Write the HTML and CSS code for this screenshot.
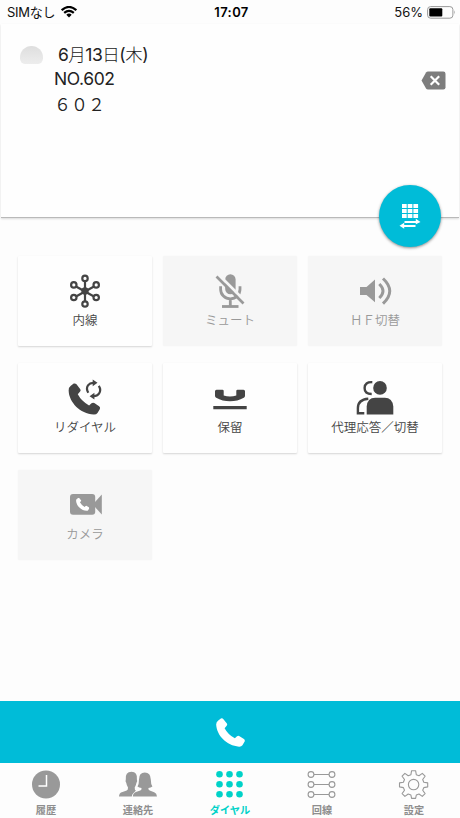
FILE: index.html
```html
<!DOCTYPE html>
<html lang="ja">
<head>
<meta charset="utf-8">
<title>ダイヤル</title>
<link rel="stylesheet" href="styles.css">
</head>
<body>
<svg class="defs" width="0" height="0">
  <symbol id="handset" viewBox="0 0 32 32"><path d="M2.500 2.800 5.400.6Q7 0 8.200 1.300L12 6.200Q12.800 7.400 11.800 8.500L9.500 11.200Q13 18 20.800 22.400L23.200 20.200Q24.500 19.200 26 20L30.800 23.200Q32.300 24.500 31.600 26L29.200 30Q28 31.700 25.500 31.600C11.500 30.500 1 19.500.2 7.500Q0 4.800 2.500 2.800z"/></symbol>
</svg>
<main class="app">
  <header class="status">
    <div class="carrier"><span>SIMなし</span>
      <svg width="16" height="12" viewBox="0 0 16 12"><path d="M.7 4.200Q8-2.300 15.300 4.200M3.200 6.900Q8 2.700 12.800 6.900" fill="none" stroke="#000" stroke-width="2.200"/><path d="M5.300 8.700Q8 6.500 10.700 8.700L8 11.600z"/></svg>
    </div>
    <time class="clock">17:07</time>
    <div class="power"><span>56%</span>
      <svg width="29" height="13" viewBox="0 0 29 13"><rect x=".6" y=".6" width="25.300" height="11.600" rx="3" fill="none" stroke="#999"/><rect x="2.300" y="2.300" width="13" height="8.200" rx="1"/><path d="M27.200 4.300q1.400 2.100 0 4.200z" fill="#888"/></svg>
    </div>
  </header>

  <section class="display">
    <div class="presence"></div>
    <div class="lines">
      <p class="date">6<span>月</span>13<span>日</span>(<span>木</span>)</p>
      <p class="number">NO.602</p>
      <p class="name">６０２</p>
    </div>
    <svg class="erase" width="25" height="19" viewBox="0 0 25 19"><path d="M7 .5h15.300q2.200 0 2.200 2.200v13.600q0 2.200-2.200 2.200H7Q5.800 18.500 5 17.400L.5 9.500 5 1.600Q5.800.5 7 .5z" fill="#7d7d7d"/><path d="M9.700 5.200l8.500 8.500m0-8.500l-8.500 8.500" stroke="#fff" stroke-width="2.200"/></svg>
    <div class="switch">
      <svg width="22" height="26" viewBox="0 0 22 26" fill="#fff"><path d="M3 1h4.700v4H3zM8.700 1h4.700v4H8.700zM14.400 1h4.700v4h-4.700zM3 6h4.700v4H3zM8.700 6h4.700v4H8.700zM14.400 6h4.700v4h-4.700zM3 11h4.700v4H3zM8.700 11h4.700v4H8.700zM14.400 11h4.700v4h-4.700z"/><path d="M5.500 18h11.300v-2.200l4.700 3.200-4.700 2.300v-1.300H5.500zM16.500 24.100H5.200v1.700L.5 22.700l4.700-2.900v2.200h11.300z"/></svg>
    </div>
  </section>

  <section class="keys">
    <button class="key">
      <svg width="48" height="38" viewBox="0 0 48 38" fill="none" stroke="#444" stroke-width="2.200"><path d="M24 9v20M15 14.500l18 10M33 14.500l-18 10"/><circle cx="24" cy="19" r="2.600" fill="#444"/><circle cx="24" cy="6.400" r="2.700"/><circle cx="24" cy="32" r="2.700"/><circle cx="12.800" cy="12.900" r="2.700"/><circle cx="35.200" cy="12.900" r="2.700"/><circle cx="12.800" cy="25.500" r="2.700"/><circle cx="35.200" cy="25.500" r="2.700"/></svg>
      <span>内線</span>
    </button>
    <button class="key off">
      <svg width="48" height="38" viewBox="0 0 48 38" fill="none" stroke="#999"><rect x="19.200" y="2.200" width="10.400" height="20" rx="5.200" fill="#999" stroke="none"/><path d="M14.600 14.200v3a9.700 9.700 0 0 0 19.400 0v-3M24.300 27v7" stroke-width="2.800"/><path d="M16 34.500h16.500" stroke-width="2.800"/><path d="M12.400 2.500l27 27" stroke="#f6f6f6" stroke-width="3"/><path d="M10.500 4.500l27 27" stroke-width="2.600"/></svg>
      <span>ミュート</span>
    </button>
    <button class="key off">
      <svg width="48" height="38" viewBox="0 0 48 38"><path d="M9 15h6.500L24 7.500v22.800L15.500 23H9z" fill="#999"/><path d="M28.300 12q7.400 7 0 14M32 6.500q13.500 12.600 0 25.200" fill="none" stroke="#999" stroke-width="3"/></svg>
      <span>ＨＦ切替</span>
    </button>
    <button class="key">
      <svg width="48" height="38" viewBox="0 0 48 38"><use href="#handset" x="7.300" y="4" width="32" height="32" fill="#444"/><path d="M27.300 13.700Q24.800 9.500 27 6.300 28.800 3.900 32.200 3.800M37.800 6.800Q40.500 11 38 14.600 36.200 17.100 32.700 17.200" fill="none" stroke="#444" stroke-width="2.200"/><path d="M31.700.4l4.800 3.400-4.800 3.400zM33.400 13.700l-4.800 3.500 4.800 3.400z" fill="#444"/></svg>
      <span>リダイヤル</span>
    </button>
    <button class="key">
      <svg width="48" height="38" viewBox="0 0 48 38" fill="#444"><path d="M10.500 10.700h6q1.200 0 1.200 1.200v4.600q6.300 1.900 12.600 0v-4.600q0-1.200 1.200-1.200h6q1.500 0 1.500 1.500v4.500q0 1.300-1.200 2-6.200 3.600-13.800 3.600t-13.800-3.600Q9 18 9 16.700v-4.500q0-1.500 1.500-1.500zM7.300 27h33.400v3.300H7.300z"/></svg>
      <span>保留</span>
    </button>
    <button class="key">
      <svg width="48" height="38" viewBox="0 0 48 38"><circle cx="29" cy="8.900" r="6.800" fill="#444"/><path d="M15.700 35.500v-8q.6-8.800 8.500-8.800h9.600q7.700 0 8.500 8.800v8z" fill="#444"/><path d="M21.300 3.200Q13.700 2.800 13.600 8.900T20.700 15M17.300 19.700Q6.900 20.500 6.900 29v5.300h6.400" fill="none" stroke="#444" stroke-width="2.400"/></svg>
      <span>代理応答／切替</span>
    </button>
    <button class="key off">
      <svg width="48" height="38" viewBox="0 0 48 38"><rect x="9" y="8" width="25.200" height="20.700" rx="3" fill="#999"/><path d="M34 16l6.800-7.400v20L34 21z" fill="#999"/><use href="#handset" x="15" y="11.700" width="13.300" height="13.300" fill="#fff"/></svg>
      <span>カメラ</span>
    </button>
  </section>

  <button class="call"><svg width="29" height="29"><use href="#handset" width="29" height="29" fill="#fff"/></svg></button>

  <nav class="tabs">
    <a class="tab"><svg width="40" height="30" viewBox="0 0 40 30"><circle cx="20" cy="15.500" r="14" fill="#999"/><path d="M20.500 6v11h-8" fill="none" stroke="#fff" stroke-width="1.500"/></svg><span>履歴</span></a>
    <a class="tab"><svg width="40" height="30" viewBox="0 0 40 30" fill="#999"><path d="M1 27.500q0-3.700 3.500-4.600l4.200-1.500q1.500-.7 1.300-3Q8.700 16.700 8.300 14 7 12.300 7.800 10.500 7 3 13.500 2.800q6.200.2 5.400 7.700.8 1.800-.5 3.500-.4 2.700-1.700 4.400-.2 2.500 1.300 3L15.500 24q-1.500 1-1.700 3.500z"/><path d="M14.800 27.500q.2-3.500 3-4.500l4.500-1.500q1.700-.8 1.200-2.500-2.500-.3-4-1.500 1.500-2.500 1.500-7Q21 3.500 26.800 3.500t6 7q0 4.500 1.600 7-1.500 1.200-4 1.500-.4 1.700 1.300 2.500l4.500 1.700q2.600 1 2.800 4.300z"/></svg><span>連絡先</span></a>
    <a class="tab active"><svg width="40" height="30" viewBox="0 0 40 30" fill="#00d2c8"><circle cx="9.500" cy="5.200" r="3.300"/><circle cx="19.500" cy="5.200" r="3.300"/><circle cx="29.500" cy="5.200" r="3.300"/><circle cx="9.500" cy="15.200" r="3.300"/><circle cx="19.500" cy="15.200" r="3.300"/><circle cx="29.500" cy="15.200" r="3.300"/><circle cx="9.500" cy="25.200" r="3.300"/><circle cx="19.500" cy="25.200" r="3.300"/><circle cx="29.500" cy="25.200" r="3.300"/></svg><span>ダイヤル</span></a>
    <a class="tab"><svg width="40" height="30" viewBox="0 0 40 30" fill="none" stroke="#999" stroke-width="1.100"><path d="M12 5.500h15M12 15.500h15M12 25.500h15"/><circle cx="9" cy="5.500" r="2.900"/><circle cx="30" cy="5.500" r="2.900"/><circle cx="9" cy="15.500" r="2.900"/><circle cx="30" cy="15.500" r="2.900"/><circle cx="9" cy="25.500" r="2.900"/><circle cx="30" cy="25.500" r="2.900"/></svg><span>回線</span></a>
    <a class="tab"><svg width="40" height="30" viewBox="0 0 40 30" fill="none" stroke="#999" stroke-width="1.100" stroke-linejoin="round"><path d="M17.600 1.700h4l.7 4 2.700 1.100 3.300-2.400 2.800 2.800-2.400 3.300 1.100 2.700 3.900.7v4l-3.900.7-1.100 2.700 2.400 3.300-2.800 2.800-3.300-2.400-2.700 1.100-.7 3.300h-4l-.7-3.300-2.700-1.100-3.300 2.400-2.800-2.800 2.400-3.300-1.100-2.700-3.900-.7v-4l3.900-.7 1.100-2.700-2.400-3.300 2.800-2.800 3.300 2.400 2.700-1.100z"/><circle cx="19.600" cy="15.600" r="5.200"/></svg><span>設定</span></a>
  </nav>
</main>
</body>
</html>
```
FILE: styles.css
```css
* { box-sizing: border-box; }
body { margin: 0; background: #fdfdfd; font-family: Inter, "Noto Sans CJK JP", sans-serif; color: #222; }
p { margin: 0; }
button { border: 0; padding: 0; font: inherit; }
svg { display: block; flex: none; }
.defs { position: absolute; }
.app { width: 460px; height: 818px; display: flex; flex-direction: column; overflow: hidden; }

.status { height: 24px; flex: none; display: grid; grid-template-columns: 1fr auto 1fr; align-items: center; padding: 0 4px 0 7px; font-size: 13px; line-height: 24px; color: #111; }
.carrier, .power { display: flex; align-items: center; gap: 6px; }
.carrier { letter-spacing: -0.25px; }
.power { justify-content: flex-end; gap: 4px; letter-spacing: 0; }
.clock { font-weight: 600; font-size: 13px; color: #000; letter-spacing: 0.4px; }

.display { position: relative; height: 194px; flex: none; margin: 0 1px; padding: 17px 13px 0 19px; display: flex; align-items: flex-start; background: #fefefe; border-bottom: 1px solid #b9b9b9; box-shadow: 0 1px 2px rgba(0,0,0,.14); }
.presence { width: 23px; height: 18px; margin-top: 5px; border-radius: 12px 12px 5px 5px / 12px 12px 6px 6px; background: linear-gradient(#dedede, #ededed); }
.lines { margin-left: 11px; flex: 1; line-height: 25px; font-size: 17.500px; }
.date { padding-left: 4px; letter-spacing: -0.5px; }
.date span { font-family: "Noto Sans CJK JP", sans-serif; font-weight: 300; }
.date, .number, .name { height: 25px; }
.number { letter-spacing: -0.4px; }
.name { font-family: "Noto Sans CJK JP", sans-serif; font-size: 17px; font-weight: 350; }
.erase { margin-top: 30px; }
.switch { position: absolute; right: 18px; bottom: -30px; width: 62px; height: 62px; border-radius: 50%; background: #00bcd8; display: flex; align-items: center; justify-content: center; box-shadow: 0 1px 3px rgba(0,0,0,.45); }

.keys { flex: 1; display: grid; grid-template-columns: repeat(3, 1fr); grid-auto-rows: 90px; gap: 17px 11px; align-content: start; padding: 38px 18px 0 18px; }
.key { display: flex; flex-direction: column; align-items: center; padding-top: 16px; background: #fefefe; color: #444; font-family: "Noto Sans CJK JP", sans-serif; font-size: 12.500px; font-weight: 350; line-height: 20px; border-radius: 1px; box-shadow: 0 1px 2px rgba(0,0,0,.16); }
.key.off { background: #f6f6f6; color: #999; box-shadow: 0 0 2px rgba(0,0,0,.04); }

.call { height: 62px; flex: none; display: flex; align-items: center; justify-content: center; background: #00bcd8; }
.tabs { height: 55px; flex: none; display: grid; grid-template-columns: repeat(5, 1fr); padding-top: 6px; background: #fdfdfd; }
.tab { display: flex; flex-direction: column; align-items: center; color: #8e8e8e; font-family: "Noto Sans CJK JP", sans-serif; font-size: 10.200px; font-weight: 700; line-height: 16px; }
.tab span { padding-top: 3px; }
.tab.active { color: #00d2c8; }
```
